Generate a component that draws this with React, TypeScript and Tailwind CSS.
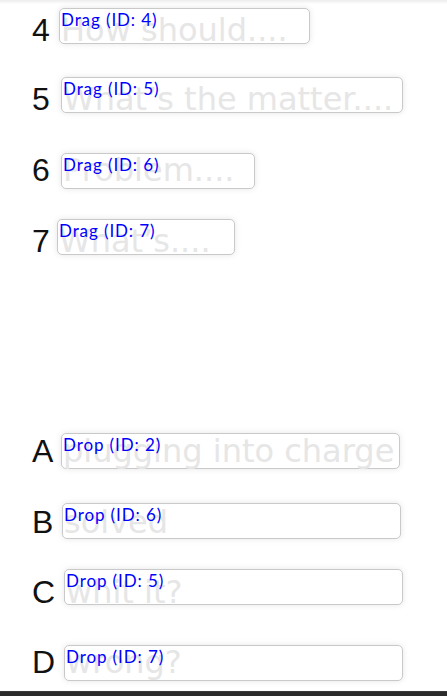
import React from "react";

type Row = {
  label: string;
  tag: string;
  ghost: string;
  rowClass: string;
  labelClass: string;
  padClass: string;
  boxClass: string;
};

const rows: Row[] = [
  { label: "4", tag: "Drag (ID: 4)", ghost: "How should....", rowClass: "mt-[4px]", labelClass: "w-[27px]", padClass: "pt-[6px]", boxClass: "w-[251px]" },
  { label: "5", tag: "Drag (ID: 5)", ghost: "What\u2019s the matter....", rowClass: "mt-[33px]", labelClass: "w-[29px]", padClass: "pt-[6px]", boxClass: "w-[342px]" },
  { label: "6", tag: "Drag (ID: 6)", ghost: "Problem....", rowClass: "mt-[40px]", labelClass: "w-[29px]", padClass: "pt-[1px]", boxClass: "w-[194px]" },
  { label: "7", tag: "Drag (ID: 7)", ghost: "What\u2019s....", rowClass: "mt-[30px]", labelClass: "w-[25px]", padClass: "pt-[6px]", boxClass: "w-[178px]" },
  { label: "A", tag: "Drop (ID: 2)", ghost: "plugging into charge", rowClass: "mt-[178px]", labelClass: "w-[29px]", padClass: "pt-[2px]", boxClass: "w-[339px]" },
  { label: "B", tag: "Drop (ID: 6)", ghost: "solved", rowClass: "mt-[34px]", labelClass: "w-[30px]", padClass: "pt-[3px]", boxClass: "w-[339px]" },
  { label: "C", tag: "Drop (ID: 5)", ghost: "whit it?", rowClass: "mt-[30px]", labelClass: "w-[32px]", padClass: "pt-[7px]", boxClass: "w-[339px]" },
  { label: "D", tag: "Drop (ID: 7)", ghost: "wrong?", rowClass: "mt-[40px]", labelClass: "w-[32px]", padClass: "pt-[1px]", boxClass: "w-[339px]" },
];

export default function App() {
  return (
    <div className="relative w-full h-[696px] bg-white overflow-hidden flex flex-col">
      <div className="h-[4px] bg-gradient-to-b from-[#ececec] to-white shrink-0" />
      <div className="flex flex-col pl-[32px]">
        {rows.map((r) => (
          <div key={r.label} className={`flex items-start h-[36px] shrink-0 ${r.rowClass}`}>
            <div
              className={`${r.labelClass} ${r.padClass} h-[36px] shrink-0 text-[32px] leading-[32px] text-[#111111]`}
              style={{ fontFamily: '"Liberation Sans", Arial, sans-serif' }}
            >
              {r.label}
            </div>
            <div
              className={`${r.boxClass} relative shrink-0 h-[36px] rounded-[5px] border border-[#c9c9c9] bg-white shadow-[0_0_6px_rgba(0,0,0,0.10)]`}
            >
              <div
                className={`${r.padClass} pl-[1px] text-[32px] leading-[30px] whitespace-nowrap text-[#e6e6e6]`}
                style={{ fontFamily: '"DejaVu Sans", sans-serif' }}
              >
                {r.ghost}
              </div>
              <div
                className="absolute left-[1px] top-[1px] text-[17px] leading-[20px] tracking-[0.9px] whitespace-nowrap text-[#0000ff]"
                style={{ fontFamily: 'Lato, sans-serif' }}
              >
                {r.tag}
              </div>
            </div>
          </div>
        ))}
      </div>
      <div className="mt-auto h-[5px] bg-[#2b2b2b] border-t border-[#3a3a3a] shrink-0" />
    </div>
  );
}
